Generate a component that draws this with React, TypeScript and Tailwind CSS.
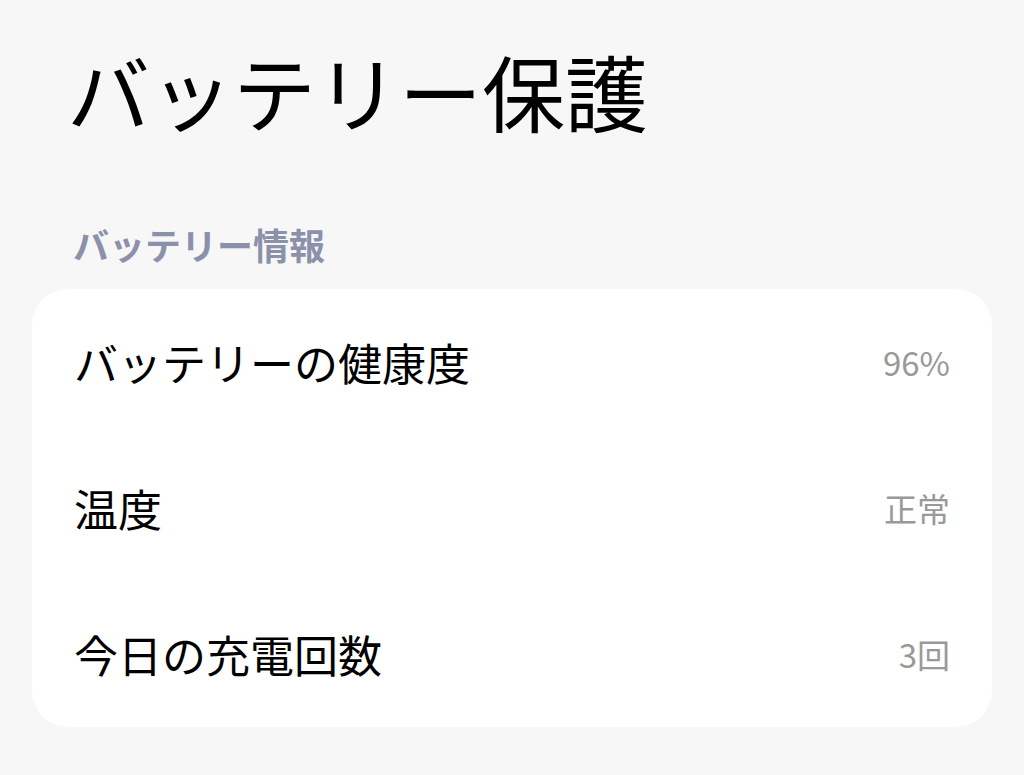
import React from "react";

const rows = [
  { label: "バッテリーの健康度", value: "96%" },
  { label: "温度", value: "正常" },
  { label: "今日の充電回数", value: "3回" },
];

export default function App() {
  return (
    <div
      className="min-h-[775px] w-full bg-[#f7f7f7] px-8 text-black"
      style={{ fontFamily: '"Noto Sans CJK JP", "Noto Sans", sans-serif' }}
    >
      <h1 className="pl-[35px] pt-[49px] text-[83px] leading-none font-normal">
        バッテリー保護
      </h1>
      <h2 className="mt-[94px] pl-[41px] text-[36px] leading-none font-bold text-[#8c91ab]">
        バッテリー情報
      </h2>
      <div className="mt-[27px] rounded-[36px] bg-white px-[42px]">
        {rows.map((row) => (
          <div key={row.label} className="flex h-[146px] items-center justify-between">
            <span className="text-[44px] leading-none">{row.label}</span>
            <span className="text-[33px] leading-none text-[#999999]">{row.value}</span>
          </div>
        ))}
      </div>
    </div>
  );
}
